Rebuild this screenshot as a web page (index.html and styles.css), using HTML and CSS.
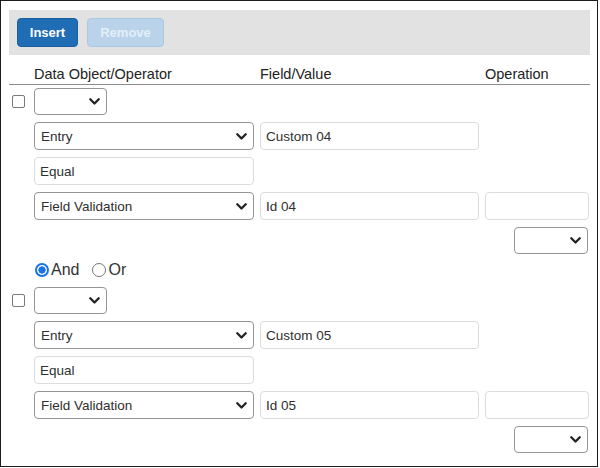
FILE: index.html
```html
<!DOCTYPE html>
<html lang="en">
<head>
<meta charset="utf-8">
<title>Filter builder</title>
<link rel="stylesheet" href="styles.css">
</head>
<body>
<div class="frame">
  <div class="toolbar">
    <button class="btn btn-primary" type="button">Insert</button>
    <button class="btn btn-disabled" type="button" disabled>Remove</button>
  </div>

  <div class="cols header">
    <span></span>
    <span>Data Object/Operator</span>
    <span>Field/Value</span>
    <span>Operation</span>
  </div>

  <div class="block">
    <div class="cols">
      <span class="cell-check"><span class="checkbox"></span></span>
      <div class="select select-sm"><span></span><svg class="chev" width="11" height="7" viewBox="0 0 11 7"><polyline points="1.3,1.3 5.5,5.5 9.7,1.3"/></svg></div>
    </div>
    <div class="cols">
      <span></span>
      <div class="select"><span>Entry</span><svg class="chev" width="11" height="7" viewBox="0 0 11 7"><polyline points="1.3,1.3 5.5,5.5 9.7,1.3"/></svg></div>
      <div class="input">Custom 04</div>
    </div>
    <div class="cols">
      <span></span>
      <div class="input">Equal</div>
    </div>
    <div class="cols">
      <span></span>
      <div class="select"><span>Field Validation</span><svg class="chev" width="11" height="7" viewBox="0 0 11 7"><polyline points="1.3,1.3 5.5,5.5 9.7,1.3"/></svg></div>
      <div class="input">Id 04</div>
      <div class="input"></div>
    </div>
    <div class="cols">
      <span></span><span></span><span></span>
      <div class="select select-op"><span></span><svg class="chev" width="11" height="7" viewBox="0 0 11 7"><polyline points="1.3,1.3 5.5,5.5 9.7,1.3"/></svg></div>
    </div>
  </div>

  <div class="radios">
    <span class="radio radio-on"></span><span class="radio-label">And</span>
    <span class="radio"></span><span class="radio-label">Or</span>
  </div>

  <div class="block">
    <div class="cols">
      <span class="cell-check"><span class="checkbox"></span></span>
      <div class="select select-sm"><span></span><svg class="chev" width="11" height="7" viewBox="0 0 11 7"><polyline points="1.3,1.3 5.5,5.5 9.7,1.3"/></svg></div>
    </div>
    <div class="cols">
      <span></span>
      <div class="select"><span>Entry</span><svg class="chev" width="11" height="7" viewBox="0 0 11 7"><polyline points="1.3,1.3 5.5,5.5 9.7,1.3"/></svg></div>
      <div class="input">Custom 05</div>
    </div>
    <div class="cols">
      <span></span>
      <div class="input">Equal</div>
    </div>
    <div class="cols">
      <span></span>
      <div class="select"><span>Field Validation</span><svg class="chev" width="11" height="7" viewBox="0 0 11 7"><polyline points="1.3,1.3 5.5,5.5 9.7,1.3"/></svg></div>
      <div class="input">Id 05</div>
      <div class="input"></div>
    </div>
    <div class="cols">
      <span></span><span></span><span></span>
      <div class="select select-op"><span></span><svg class="chev" width="11" height="7" viewBox="0 0 11 7"><polyline points="1.3,1.3 5.5,5.5 9.7,1.3"/></svg></div>
    </div>
  </div>
</div>
</body>
</html>
```

FILE: styles.css
```css
html, body {
  margin: 0;
  padding: 0;
  background: #ffffff;
}

body {
  font-family: "Liberation Sans", Arial, sans-serif;
  font-size: 13.5px;
  color: #2f2f2f;
}

.frame {
  box-sizing: border-box;
  width: 598px;
  height: 467px;
  border: 1px solid #1c1c1c;
  background: #ffffff;
  padding: 9px 7px 0 8px;
}

.toolbar {
  display: flex;
  align-items: center;
  gap: 9px;
  height: 45px;
  box-sizing: border-box;
  padding: 0 8px;
  background: #e2e2e2;
}

.btn {
  box-sizing: border-box;
  height: 29px;
  border-radius: 4px;
  font-family: "Liberation Sans", Arial, sans-serif;
  font-size: 13px;
  font-weight: bold;
  padding: 0;
  cursor: pointer;
}

.btn-primary {
  width: 61px;
  background: #1f6db5;
  border: 1px solid #1a5f9f;
  color: #ffffff;
}

.btn-disabled {
  width: 77px;
  background: #bad3ea;
  border: 1px solid #abc8e3;
  color: #e4eef7;
  cursor: default;
}

.cols {
  display: grid;
  grid-template-columns: 19px 220px 219px 104px;
  column-gap: 6px;
  align-items: center;
}

.header {
  box-sizing: border-box;
  height: 30px;
  padding: 11px 0 1px;
  line-height: 17px;
  font-size: 14.5px;
  color: #222222;
  border-bottom: 1px solid #8c8c8c;
  align-items: start;
}

.block {
  display: flex;
  flex-direction: column;
  gap: 7px;
  padding-top: 3px;
}

.block > .cols {
  height: 28px;
}

.block > .cols:first-child,
.block > .cols:last-child {
  height: 27px;
}

.cell-check {
  display: flex;
  align-items: center;
  padding-left: 3px;
}

.checkbox {
  display: block;
  box-sizing: border-box;
  width: 13px;
  height: 13px;
  border: 1px solid #7a7a7a;
  border-radius: 2px;
  background: #ffffff;
}

.select,
.input {
  box-sizing: border-box;
  height: 100%;
  border-radius: 4px;
  background: #ffffff;
  display: flex;
  align-items: center;
  white-space: nowrap;
}

.select {
  border: 1px solid #959595;
  justify-content: space-between;
  padding: 0 6px 0 6px;
}

.input {
  border: 1px solid #dcdcdc;
  padding: 0 5px;
}

.select-sm {
  width: 73px;
  justify-self: start;
}

.select-op {
  width: 74px;
  justify-self: end;
  margin-right: 1px;
}

.chev {
  display: block;
  flex: none;
}

.chev polyline {
  fill: none;
  stroke: #222222;
  stroke-width: 2.3;
  stroke-linecap: round;
  stroke-linejoin: round;
}

.radios {
  display: flex;
  align-items: center;
  height: 22px;
  margin: 5px 0 3px;
  padding-left: 26px;
  font-size: 16px;
  color: #333333;
}

.radio {
  box-sizing: border-box;
  width: 14px;
  height: 14px;
  border-radius: 50%;
  border: 1px solid #767676;
  background: #ffffff;
  flex: none;
}

.radio-on {
  border: 2px solid #1a72e6;
  background: radial-gradient(circle, #1a72e6 0 3.4px, #ffffff 3.9px);
}

.radio-label {
  margin-left: 2px;
  margin-right: 13px;
}
```
